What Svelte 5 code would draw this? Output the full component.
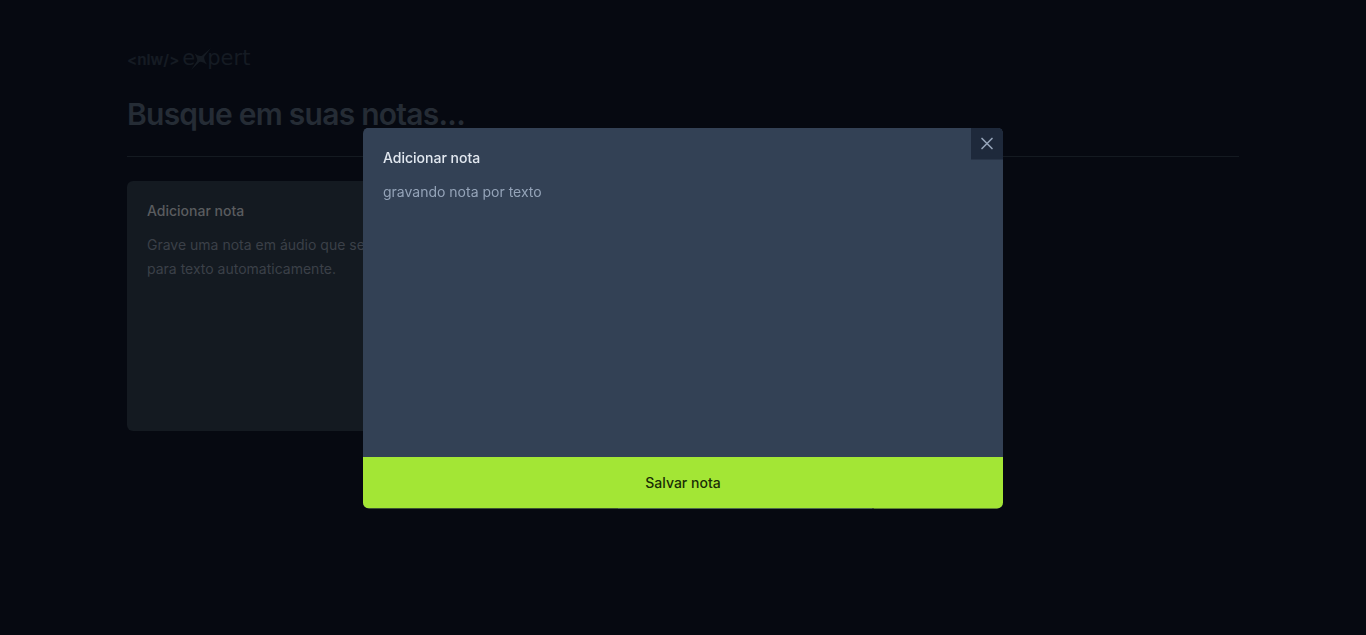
<script>
  let search = $state('');
  let content = $state('gravando nota por texto');
</script>

<div class="page">
  <header class="logo" aria-label="nlw expert">
    <span class="tag">&lt;nlw/&gt;</span>
    <span class="word"
      >e<svg class="star" viewBox="0 0 20 22" aria-hidden="true">
        <path d="M20 0 L13.4 8.4 Q12.4 11 16 16.6 Q11 13.2 8.4 14 L0 22 L6 13.2 Q7 11 3.6 5.4 Q8.4 8.8 11 7.8 Z" />
      </svg>pert</span
    >
  </header>

  <form onsubmit={(e) => e.preventDefault()}>
    <input type="text" aria-label="Busque em suas notas" placeholder="Busque em suas notas..." bind:value={search} />
  </form>

  <div class="divider"></div>

  <main class="grid">
    <button class="card" type="button">
      <span class="title">Adicionar nota</span>
      <span class="text">Grave uma nota em áudio que será convertida para texto automaticamente.</span>
    </button>
  </main>
</div>

<div class="dialog" role="dialog" aria-modal="true" aria-labelledby="dialog-title">
  <button class="close" type="button" aria-label="Fechar">
    <svg viewBox="0 0 24 24" aria-hidden="true"><path d="M18 6 6 18M6 6l12 12" /></svg>
  </button>
  <form class="note" onsubmit={(e) => e.preventDefault()}>
    <div class="body">
      <label class="title" id="dialog-title" for="note-content">Adicionar nota</label>
      <textarea id="note-content" class="text" bind:value={content}></textarea>
    </div>
    <button class="save" type="submit">Salvar nota</button>
  </form>
</div>

<style>
  :global(body) {
    margin: 0;
    background: #060911;
    font-family: Inter, sans-serif;
    color: #f8fafc;
  }

  * {
    box-sizing: border-box;
  }

  button,
  input,
  textarea {
    margin: 0;
    padding: 0;
    border: 0;
    background: transparent;
    font: inherit;
    color: inherit;
    outline: none;
  }

  button {
    cursor: pointer;
  }

  .page {
    display: flex;
    flex-direction: column;
    gap: 24px;
    max-width: 1152px;
    margin: 48px auto;
    padding: 0 20px;
  }

  .logo {
    display: flex;
    align-items: baseline;
    gap: 3px;
    height: 24px;
    line-height: 20px;
    color: #151b23;
  }

  .tag {
    font-size: 15px;
    font-weight: 700;
  }

  .word {
    font-family: "DejaVu Sans", sans-serif;
    font-size: 21px;
    font-weight: 400;
  }

  .star {
    width: 20px;
    height: 22px;
    margin: 0 -4px;
    vertical-align: -5px;
    fill: currentColor;
  }

  input {
    display: block;
    width: 100%;
    height: 36px;
    font-size: 30px;
    line-height: 36px;
    font-weight: 600;
    letter-spacing: -0.025em;
  }

  input::placeholder {
    color: #252c35;
    opacity: 1;
  }

  .divider {
    height: 1px;
    background: #141a21;
  }

  .grid {
    display: grid;
    grid-template-columns: repeat(3, 1fr);
    grid-auto-rows: 250px;
    gap: 24px;
  }

  .card {
    display: flex;
    flex-direction: column;
    gap: 12px;
    padding: 20px;
    border-radius: 6px;
    background: #141a21;
    text-align: left;
  }

  .title {
    font-size: 14px;
    line-height: 20px;
    font-weight: 500;
  }

  .text {
    font-size: 14px;
    line-height: 24px;
  }

  .card .title {
    color: #5a5c5f;
  }

  .card .text {
    color: #3b4048;
  }

  .dialog {
    position: fixed;
    top: 50%;
    left: 50%;
    transform: translate(-50%, -50%);
    display: flex;
    width: 100%;
    max-width: 640px;
    height: 60vh;
    overflow: hidden;
    border-radius: 6px;
    background: #334155;
  }

  .close {
    position: absolute;
    top: 0;
    right: 0;
    padding: 6px;
    background: #1e293b;
    color: #94a3b8;
  }

  .close svg {
    display: block;
    width: 20px;
    height: 20px;
    fill: none;
    stroke: currentColor;
    stroke-width: 2;
    stroke-linecap: round;
    stroke-linejoin: round;
  }

  .note {
    display: flex;
    flex: 1;
    flex-direction: column;
  }

  .body {
    display: flex;
    flex: 1;
    flex-direction: column;
    gap: 12px;
    padding: 20px;
  }

  .body .title {
    color: #e2e8f0;
  }

  textarea {
    flex: 1;
    resize: none;
    color: #94a3b8;
  }

  .save {
    padding: 16px 0;
    background: #a3e635;
    color: #1a2e05;
    font-size: 14px;
    line-height: 20px;
    font-weight: 500;
  }
</style>
